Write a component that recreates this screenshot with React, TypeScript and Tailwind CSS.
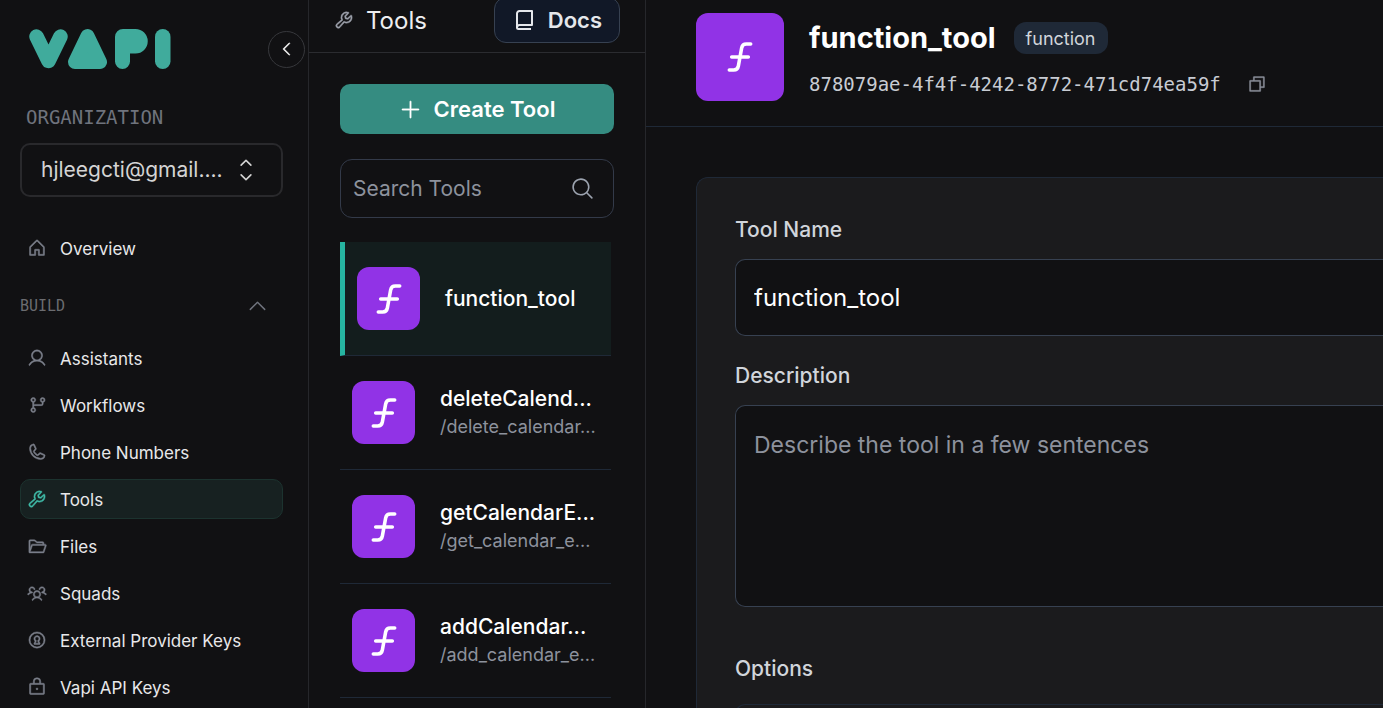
import type { ReactNode } from "react";
import type { IconType } from "react-icons";
import {
  PiCaretLeft,
  PiCaretUp,
  PiCaretUpDown,
  PiCopy,
  PiFolderOpen,
  PiFunctionBold,
  PiGitBranch,
  PiHouse,
  PiKeyhole,
  PiLock,
  PiMagnifyingGlass,
  PiPhone,
  PiPlus,
  PiUser,
  PiUsersThree,
  PiWrench,
} from "react-icons/pi";

type NavEntry = { label: string; icon: IconType; active?: boolean };

const buildNav: NavEntry[] = [
  { label: "Assistants", icon: PiUser },
  { label: "Workflows", icon: PiGitBranch },
  { label: "Phone Numbers", icon: PiPhone },
  { label: "Tools", icon: PiWrench, active: true },
  { label: "Files", icon: PiFolderOpen },
  { label: "Squads", icon: PiUsersThree },
  { label: "External Provider Keys", icon: PiKeyhole },
  { label: "Vapi API Keys", icon: PiLock },
];

const tools = [
  { name: "function_tool", path: "", active: true },
  { name: "deleteCalend...", path: "/delete_calendar..." },
  { name: "getCalendarE...", path: "/get_calendar_e..." },
  { name: "addCalendar...", path: "/add_calendar_e..." },
];

function Logo() {
  return (
    <svg viewBox="0 0 144 42" className="h-[42px] w-36 text-[#40ab9c]" role="img" aria-label="Vapi">
      <g fill="currentColor" stroke="currentColor" strokeLinecap="round" strokeLinejoin="round">
        <path d="M8.500 8.500 20.500 33 32.500 8.500" fill="none" strokeWidth="14.500" />
        <path d="M59.500 8 72 34H47Z" strokeWidth="14" />
      </g>
      <path
        fill="currentColor"
        d="M95 1h12.500a12.250 12.250 0 0 1 0 24.500H102V33.500a7.500 7.500 0 0 1-15 0V9a8 8 0 0 1 8-8Z"
      />
      <rect x="127" y="1" width="15.500" height="40" rx="7.750" fill="currentColor" />
    </svg>
  );
}

function BookIcon() {
  return (
    <svg viewBox="0 0 24 24" className="size-6" fill="none" stroke="currentColor" strokeWidth="2" strokeLinejoin="round" aria-hidden="true">
      <path d="M5 20V5.500A2.500 2.500 0 0 1 7.500 3H20v14H7.500A2.500 2.500 0 0 0 5 19.500 1.500 1.500 0 0 0 6.500 21H19" />
    </svg>
  );
}

function NavItem({ label, icon: Icon, active }: NavEntry) {
  return (
    <a
      href="#"
      aria-current={active ? "page" : undefined}
      className={
        active
          ? "flex h-10 items-center gap-[13px] rounded-[10px] border border-[#1c332f] bg-[#172121] px-[6px] text-[17px] text-[#e8e8ea]"
          : "flex h-10 items-center gap-[13px] rounded-[10px] border border-transparent px-[6px] text-[17px] text-[#e8e8ea]"
      }
    >
      <Icon size={20} strokeWidth={6} className={active ? "text-[#3fb8a6]" : "text-[#7b7f8a]"} />
      <span className="pt-[2px] leading-6">{label}</span>
    </a>
  );
}

function Sidebar() {
  return (
    <aside className="flex w-[309px] shrink-0 flex-col border-r border-[#26272b] pl-5">
      <div className="flex items-center justify-between pt-[28px] pr-[3px] pl-2">
        <a href="#">
          <Logo />
        </a>
        <button
          type="button"
          aria-label="Collapse sidebar"
          className="flex size-[37px] items-center justify-center rounded-full border border-[#37383c] text-white"
        >
          <PiCaretLeft size={18} strokeWidth={6} />
        </button>
      </div>
      <div className="flex flex-col pr-[25px]">
        <div className="mt-8 pl-[6px] font-['DejaVu_Sans_Mono',monospace] text-[19px] leading-[30px] text-[#6f737d]">
          ORGANIZATION
        </div>
        <button
          type="button"
          className="mt-[11px] flex h-[54px] items-center gap-[10px] rounded-[10px] border-2 border-[#29292c] pl-[19px] text-[21px] text-[#d4d4d4]"
        >
          hjleegcti@gmail....
          <PiCaretUpDown size={26} />
        </button>
        <nav className="mt-[31px] flex flex-col">
          <NavItem label="Overview" icon={PiHouse} />
          <button
            type="button"
            className="mt-[18px] mb-[12px] flex h-10 items-center justify-between pr-[14px] font-['DejaVu_Sans_Mono',monospace] text-[15px] text-[#6b6c70]"
          >
            BUILD
            <PiCaretUp size={23} className="text-[#6f737d]" />
          </button>
          <div className="flex flex-col gap-[7px]">
            {buildNav.map((entry) => (
              <NavItem key={entry.label} {...entry} />
            ))}
          </div>
        </nav>
      </div>
    </aside>
  );
}

function ToolList() {
  return (
    <section className="w-[337px] shrink-0 border-r border-[#26272b]">
      <header className="flex h-[53px] items-end justify-between border-b border-[#2b2c30] px-[25px] pb-[9px]">
        <h1 className="flex h-[46px] items-center gap-3 text-[24px] text-[#eeeef0]">
          <PiWrench size={20} strokeWidth={6} className="text-[#9b9fa9]" />
          <span className="pt-[2px] leading-8">Tools</span>
        </h1>
        <a
          href="#"
          className="flex h-[46px] items-center gap-[12px] rounded-[12px] border border-[#374151] bg-[#111827] px-[17px] text-[22px] font-semibold text-[#e5e7eb]"
        >
          <BookIcon />
          Docs
        </a>
      </header>
      <div className="px-[31px] pt-[31px]">
        <button
          type="button"
          className="flex h-[50px] w-full items-center justify-center gap-3 rounded-[10px] bg-[#358c81] text-[22px] font-semibold text-white"
        >
          <PiPlus size={23} strokeWidth={4} />
          Create Tool
        </button>
        <label className="mt-[25px] flex h-[59px] items-center gap-2 rounded-[12px] border border-[#333a49] pr-[18px] pl-3 text-[#9ca3af]">
          <input
            type="text"
            aria-label="Search tools"
            placeholder="Search Tools"
            className="min-w-0 flex-1 bg-transparent text-[21px] text-white outline-none placeholder:text-[#8d929d]"
          />
          <PiMagnifyingGlass size={25} />
        </label>
        <ul className="mt-6 mr-[3px]">
          {tools.map((tool) => (
            <li key={tool.name}>
              <a
                href="#"
                className={
                  tool.active
                    ? "flex h-[114px] items-center gap-[25px] border-b border-l-[5px] border-b-[#1f2937] border-l-[#26b5a1] bg-[#131d1d] pl-3"
                    : "flex h-[114px] items-center gap-[25px] border-b border-[#1f2937] pl-3"
                }
              >
                <span className="flex size-[63px] shrink-0 items-center justify-center rounded-[12px] bg-[#9133e6] text-white">
                  <PiFunctionBold size={38} />
                </span>
                <span className="flex flex-col whitespace-nowrap">
                  <span className="text-[21px] leading-[28px] font-medium text-white">{tool.name}</span>
                  {tool.path && <span className="text-[18px] leading-[28px] text-[#8d929d]">{tool.path}</span>}
                </span>
              </a>
            </li>
          ))}
        </ul>
      </div>
    </section>
  );
}

function FieldLabel({ htmlFor, children }: { htmlFor: string; children: ReactNode }) {
  return (
    <label htmlFor={htmlFor} className="block text-[21px] leading-[32px] font-medium text-[#d1d5db]">
      {children}
    </label>
  );
}

function ToolDetail() {
  return (
    <main className="flex min-w-0 flex-1 flex-col">
      <header className="flex h-[127px] shrink-0 gap-[25px] border-b border-[#1f2937] pt-[13px] pl-[50px]">
        <span className="flex size-[88px] shrink-0 items-center justify-center rounded-[12px] bg-[#9133e6] text-white">
          <PiFunctionBold size={38} />
        </span>
        <div className="flex flex-col">
          <div className="flex h-[50px] items-center gap-[18px]">
            <h2 className="text-[29px] font-bold text-white">function_tool</h2>
            <span className="flex h-8 items-center rounded-[12px] bg-[#1f2937] px-3 text-[18px] text-[#d1d5db]">
              function
            </span>
          </div>
          <div className="flex h-[42px] items-center gap-[26px] font-['DejaVu_Sans_Mono',monospace] text-[19px] text-[#c8ccd3]">
            878079ae-4f4f-4242-8772-471cd74ea59f
            <button type="button" aria-label="Copy tool ID" className="text-[#8d929d]">
              <PiCopy size={20} strokeWidth={4} />
            </button>
          </div>
        </div>
      </header>
      <form className="mt-[50px] ml-[50px] flex-1 rounded-l-[12px] border border-r-0 border-[#1f2937] bg-[#1b1b1d] pt-[36px] pl-[38px]">
        <FieldLabel htmlFor="tool-name">Tool Name</FieldLabel>
        <input
          id="tool-name"
          type="text"
          defaultValue="function_tool"
          className="mt-[13px] block h-[77px] w-full rounded-l-[10px] border border-r-0 border-[#374151] bg-[#111113] px-[18px] text-[24px] text-white outline-none"
        />
        <div className="mt-6">
          <FieldLabel htmlFor="tool-description">Description</FieldLabel>
        </div>
        <textarea
          id="tool-description"
          placeholder="Describe the tool in a few sentences"
          className="mt-[13px] block h-[202px] w-full resize-none rounded-l-[10px] border border-r-0 border-[#374151] bg-[#111113] px-[18px] py-5 text-[23px] leading-[38px] text-white outline-none placeholder:text-[#8d929d]"
        />
        <fieldset className="mt-[46px]">
          <legend className="text-[21px] leading-[32px] font-medium text-[#d1d5db]">Options</legend>
          <div className="mt-[19px] h-24 rounded-l-[10px] border border-r-0 border-[#1f2937]" />
        </fieldset>
      </form>
    </main>
  );
}

export default function App() {
  return (
    <div className="flex h-screen overflow-hidden bg-[#111113] font-['Inter',sans-serif]">
      <Sidebar />
      <ToolList />
      <ToolDetail />
    </div>
  );
}
